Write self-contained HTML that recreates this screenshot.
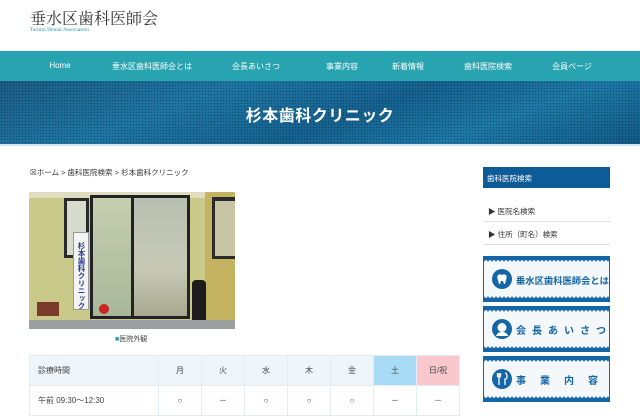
<!DOCTYPE html>
<html><head><meta charset="utf-8"><style>
*{margin:0;padding:0;box-sizing:border-box}
body{width:640px;height:400px;overflow:hidden;background:#fff;font-family:"Liberation Sans","Noto Sans CJK JP",sans-serif;position:relative;color:#333}
.abs{position:absolute}
.logo{left:30px;top:6px;font-family:"Liberation Serif","Noto Serif CJK SC",serif;font-size:16px;color:#333;letter-spacing:0}
.sub{left:30px;top:27px;font-family:"Liberation Serif",serif;font-size:5.5px;color:#2a9aa8}
.nav{left:0;top:51px;width:640px;height:30px;background:#28a3b0}
.nav span{position:absolute;top:10px;font-size:8px;color:#fff;transform:translateX(-50%);white-space:nowrap}
.banner{left:0;top:81px;width:640px;height:63px;background:linear-gradient(160deg,#1b5d85 0%,#1f77a3 30%,#16628f 55%,#1e7aa6 75%,#125a86 100%);overflow:hidden}
.banner:before{content:"";position:absolute;inset:0;background-image:radial-gradient(rgba(0,20,50,.35) 0.6px,transparent 0.9px);background-size:3px 3px}
.banner h1{position:absolute;left:0;right:0;top:21px;text-align:center;color:#fff;font-size:16px;font-weight:bold;letter-spacing:.5px}
.line{left:0;top:144px;width:640px;height:2px;background:#cfe6f0}
.bc{left:30px;top:167px;font-size:7.5px;color:#333}
.cap{left:115px;top:334px;font-size:7px;color:#444}
table{position:absolute;left:29px;top:355px;border-collapse:collapse;font-size:8px}
td{border:1px solid #e4ecf2;text-align:center;height:30px;color:#444}
.h td{background:#eef6fc}
.side-h{left:483px;top:167px;width:127px;height:21px;background:#0e5c97;color:#fff;font-size:7.5px;padding:6px 0 0 4px}
.si{left:483px;width:127px;font-size:7.5px;color:#333;border-bottom:1px solid #ddd;padding-left:5px;height:22px;padding-top:6px}
.bn{left:483px;width:127px;height:46px;background:#f5f8fb;border-left:1px solid #1466a6;border-right:1px solid #1466a6}
.bn:before,.bn:after{content:"";position:absolute;left:0;right:0;height:6px;background:radial-gradient(circle at 2px 6px,#f5f8fb 1.6px,#1466a6 2px);background-size:4px 6px}
.bn:before{top:0}
.bn:after{bottom:0;transform:scaleY(-1)}
.bn .ic{position:absolute;left:8px;top:13px;width:20px;height:20px;border-radius:50%;background:#1466a6}
.bn .t{position:absolute;left:32px;top:17px;color:#1466a6;font-weight:bold;font-size:9.3px;white-space:nowrap}
</style></head><body>
<div class="abs logo">垂水区歯科医師会</div>
<div class="abs sub">Tarumi Dental Association</div>
<div class="abs nav">
<span style="left:60px">Home</span><span style="left:152px">垂水区歯科医師会とは</span><span style="left:256px">会長あいさつ</span><span style="left:342px">事業内容</span><span style="left:408px">新着情報</span><span style="left:488px">歯科医院検索</span><span style="left:572px">会員ページ</span>
</div>
<div class="abs banner"><h1>杉本歯科クリニック</h1></div>
<div class="abs line"></div>
<div class="abs bc">☒ホーム &gt; 歯科医院検索 &gt; 杉本歯科クリニック</div>

<div class="abs" style="left:29px;top:192px;width:206px;height:137px;background:#c9c98a;overflow:hidden">
 <div class="abs" style="left:0;top:0;width:206px;height:6px;background:#e0dcc0"></div>
 <div class="abs" style="left:176px;top:0;width:30px;height:137px;background:#c4b360"></div>
 <div class="abs" style="left:35px;top:6px;width:25px;height:60px;background:#2a2a2a"></div>
 <div class="abs" style="left:38px;top:9px;width:19px;height:54px;background:#d8dccc"></div>
 <div class="abs" style="left:183px;top:5px;width:23px;height:62px;background:#2a2a2a"></div>
 <div class="abs" style="left:186px;top:9px;width:20px;height:55px;background:#c7c5a4"></div>
 <div class="abs" style="left:61px;top:3px;width:100px;height:124px;background:#222"></div>
 <div class="abs" style="left:64px;top:6px;width:38px;height:118px;background:linear-gradient(#c6cfb0,#a8b79a)"></div>
 <div class="abs" style="left:105px;top:6px;width:53px;height:118px;background:linear-gradient(#b8c0b0,#c7c9b6 60%,#a8a890)"></div>
 <div class="abs" style="left:44px;top:40px;width:16px;height:78px;background:#f4f4f4;border:1px solid #999;overflow:hidden"></div>
 <div class="abs" style="left:47px;top:50px;font-size:7.5px;line-height:10px;writing-mode:vertical-rl;color:#2a3d8a;font-weight:bold;white-space:nowrap">杉本歯科クリニック</div>
 <div class="abs" style="left:163px;top:88px;width:14px;height:45px;background:#1c1c1c;border-radius:4px 4px 0 0"></div>
 <div class="abs" style="left:8px;top:110px;width:22px;height:14px;background:#7a3a2a"></div>
 <div class="abs" style="left:70px;top:112px;width:10px;height:10px;background:#c22;border-radius:50%"></div>
 <div class="abs" style="left:0;top:128px;width:206px;height:9px;background:#9aa0a0"></div>
</div>
<div class="abs cap"><span style="color:#2a9aa8">■</span>医院外観</div>

<table>
<tr class="h"><td style="width:129px;text-align:left;padding-left:8px">診療時間</td><td style="width:43px">月</td><td style="width:43px">火</td><td style="width:43px">水</td><td style="width:43px">木</td><td style="width:43px">金</td><td style="width:43px;background:#a8dcf6">土</td><td style="width:43px;background:#f8c8cc">日/祝</td></tr>
<tr><td style="text-align:left;padding-left:8px">午前 09:30〜12:30</td><td>○</td><td>－</td><td>○</td><td>○</td><td>○</td><td>－</td><td>－</td></tr>
</table>

<div class="abs side-h">歯科医院検索</div>
<div class="abs si" style="top:200px">▶ 医院名検索</div>
<div class="abs si" style="top:223px">▶ 住所（町名）検索</div>

<div class="abs bn" style="top:256px"><div class="ic"><svg width="20" height="20" viewBox="0 0 20 20"><path d="M6 6c1.5-1 3-.5 4 0 1-.5 2.5-1 4 0 1 1 .8 3.5 0 5l-1 4h-1l-1-3h-2l-1 3H7l-1-4c-.8-1.5-1-4 0-5z" fill="#fff"/></svg></div><div class="t">垂水区歯科医師会とは</div></div>
<div class="abs bn" style="top:306px"><div class="ic"><svg width="20" height="20" viewBox="0 0 20 20"><circle cx="10" cy="8.5" r="4.5" fill="#fff"/><path d="M4 17c1-3 3-4 6-4s5 1 6 4z" fill="#fff"/></svg></div><div class="t" style="letter-spacing:6px;font-size:10px;top:16px">会長あいさつ</div></div>
<div class="abs bn" style="top:356px"><div class="ic"><svg width="20" height="20" viewBox="0 0 20 20"><path d="M7 4v12M5.5 4v4M8.5 4v4M5.5 8h3M13 4c1.5 0 2 2 2 4s-1 2-2 2v6" stroke="#fff" stroke-width="1.3" fill="none"/></svg></div><div class="t" style="letter-spacing:14px;font-size:10px;top:16px">事業内容</div></div>
</body></html>
